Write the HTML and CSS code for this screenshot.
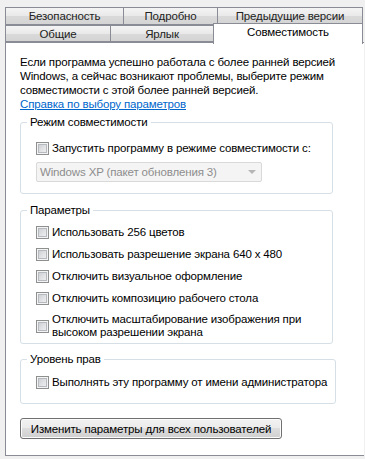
FILE: index.html
```html
<!DOCTYPE html>
<html lang="ru">
<head>
  <meta charset="UTF-8">
  <title>Свойства: Совместимость</title>
  <link rel="stylesheet" href="styles.css">
</head>
<body>
  <div class="dialog">
    <!-- Вкладки -->
    <div class="tabs">
      <div class="tab-row">
        <div class="tab t-sec">Безопасность</div>
        <div class="tab t-det">Подробно</div>
        <div class="tab t-prev">Предыдущие версии</div>
      </div>
      <div class="tab-row">
        <div class="tab t-gen">Общие</div>
        <div class="tab t-lnk">Ярлык</div>
        <div class="tab t-comp selected">Совместимость</div>
      </div>
    </div>
    <!-- Содержимое вкладки -->
    <div class="panel">
      <p class="intro">Если программа успешно работала с более ранней версией<br>Windows, а сейчас возникают проблемы, выберите режим<br>совместимости с этой более ранней версией.</p>
      <a class="help" href="#">Справка по выбору параметров</a>

      <fieldset class="group g-mode">
        <legend>Режим совместимости</legend>
        <label class="check"><span class="box"></span>Запустить программу в режиме совместимости с:</label>
        <div class="combo">
          <span>Windows XP (пакет обновления 3)</span>
          <span class="arrow"></span>
        </div>
      </fieldset>

      <fieldset class="group g-params">
        <legend>Параметры</legend>
        <label class="check"><span class="box"></span>Использовать 256 цветов</label>
        <label class="check"><span class="box"></span>Использовать разрешение экрана 640 x 480</label>
        <label class="check"><span class="box"></span>Отключить визуальное оформление</label>
        <label class="check"><span class="box"></span>Отключить композицию рабочего стола</label>
        <label class="check multi"><span class="box"></span><span>Отключить масштабирование изображения при<br>высоком разрешении экрана</span></label>
      </fieldset>

      <fieldset class="group g-rights">
        <legend>Уровень прав</legend>
        <label class="check"><span class="box"></span>Выполнять эту программу от имени администратора</label>
      </fieldset>

      <button class="btn">Изменить параметры для всех пользователей</button>
    </div>
  </div>
</body>
</html>
```

FILE: styles.css
```css
:root {
  --bg: #f0f0f0;
  --tab-border: #898c95;
  --group-border: #d5dfe5;
  --link: #0066cc;
  --text: #000000;
}
*, *::before, *::after { box-sizing: border-box; }
body {
  margin: 0;
  background: var(--bg);
  font-family: "Liberation Sans", Arial, sans-serif;
  font-size: 11.5px;
  letter-spacing: -0.15px;
  color: var(--text);
}
.dialog {
  width: 365px;
  height: 459px;
  padding: 7px 0 0 5px;
  overflow: hidden;
}

/* вкладки */
.tab-row { display: flex; height: 18px; }
.tab-row + .tab-row { height: 17px; }
.tab {
  border: 1px solid var(--tab-border);
  border-right: none;
  background: linear-gradient(#f4f4f4, #e9e9e9 50%, #dadada 51%, #d4d4d4);
  color: #222;
  text-align: center;
  line-height: 16px;
  white-space: nowrap;
}
.tab:last-child { border-right: 1px solid var(--tab-border); }
.t-sec { width: 118px; }
.t-det { width: 94px; }
.t-prev { width: 146px; }
.t-gen { width: 105px; }
.t-lnk { width: 103px; }
.t-comp { width: 150px; }
.tab.selected {
  background: #fff;
  color: #000;
  border-bottom: none;
  margin-top: -2px;
  height: 21px;
  line-height: 17px;
}

/* панель */
.panel {
  width: 359px;
  height: 414px;
  border: 1px solid var(--tab-border);
  border-right: none;
  background: #fff;
  padding: 12px 20px 0 14px;
}
.intro { margin: 0; line-height: 14px; white-space: nowrap; }
.help {
  display: block;
  color: var(--link);
  line-height: 14px;
  text-decoration: underline;
}

.group {
  margin: 4px 0 0 0;
  padding: 0 8px 0 15px;
  border: 1px solid var(--group-border);
  border-radius: 3px;
  width: 313px;
}
.group legend {
  padding: 0 3px;
  margin-left: -9px;
  line-height: 15px;
}
.g-mode { padding-top: 11px; padding-bottom: 11px; }
.g-params { margin-top: 9px; padding-top: 7px; padding-bottom: 4px; }
.g-rights { margin-top: 8px; padding-top: 8px; padding-bottom: 13px; }

.check {
  display: flex;
  align-items: center;
  gap: 3px;
  line-height: 15px;
  white-space: nowrap;
}
.g-params .check + .check { margin-top: 7px; }
.check.multi { line-height: 13px; }
.box {
  flex: none;
  width: 13px;
  height: 13px;
  border: 1px solid #8e8f8f;
  background: linear-gradient(135deg, #c4c8cd, #e4e5e7 60%, #f3f3f3);
  box-shadow: inset 0 0 0 1px #f4f4f4, inset 0 0 0 2px #b6b9be;
}

.combo {
  margin-top: 6px;
  width: 226px;
  height: 20px;
  border: 1px solid #d9d9d9;
  border-radius: 2px;
  background: #f4f4f4;
  color: #8d8d8d;
  display: flex;
  align-items: center;
  justify-content: space-between;
  padding: 0 5px 0 3px;
}
.arrow {
  width: 0;
  height: 0;
  border-left: 4px solid transparent;
  border-right: 4px solid transparent;
  border-top: 4px solid #b5b5b5;
}

.btn {
  margin-top: 14px;
  width: 262px;
  height: 21px;
  border: 1px solid #707070;
  border-radius: 3px;
  background: linear-gradient(#f2f2f2, #ebebeb 45%, #dddddd 50%, #cfcfcf);
  box-shadow: inset 0 0 0 1px #fcfcfc;
  font-family: inherit;
  font-size: 11.5px;
  letter-spacing: -0.15px;
  color: var(--text);
  padding: 0;
}
```
